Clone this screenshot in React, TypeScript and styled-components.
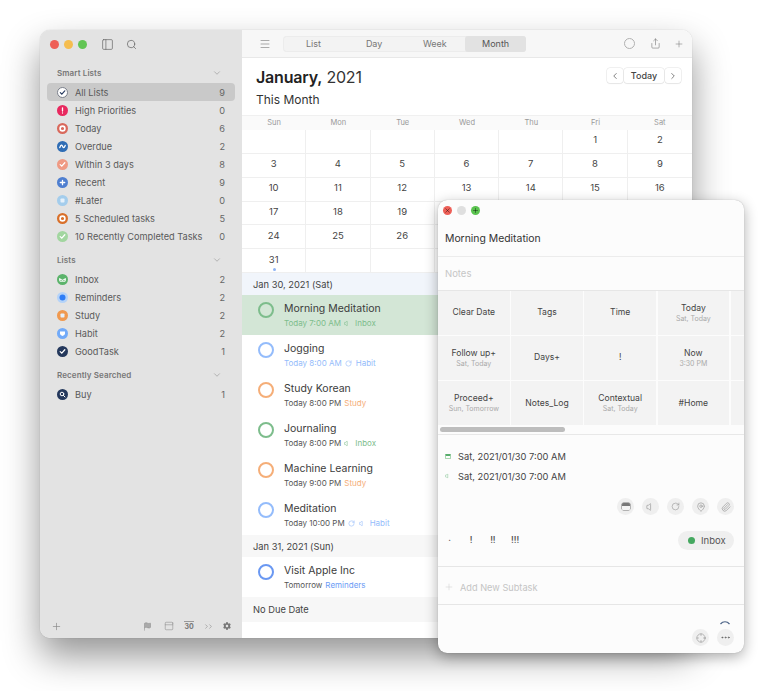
import styled, { createGlobalStyle } from 'styled-components';
import {
  ChevronDown,
  ChevronLeft,
  ChevronRight,
  Crosshair,
  Ellipsis,
  Flag,
  MapPin,
  Menu,
  PanelLeft,
  Paperclip,
  Plus,
  RotateCw,
  Search,
  Share,
  Volume,
  X,
} from 'lucide-react';
import { FaCog } from 'react-icons/fa';

const GlobalStyle = createGlobalStyle`
  html, body {
    margin: 0;
    padding: 0;
    background: #fff;
  }
  body {
    font-family: Inter, "Liberation Sans", sans-serif;
    color: #333;
    -webkit-font-smoothing: antialiased;
  }
`;

const Desktop = styled.div`
  position: relative;
  width: 768px;
  height: 691px;
  overflow: hidden;
  background: #fff;
`;

const MainWindow = styled.div`
  position: absolute;
  left: 40px;
  top: 30px;
  width: 652px;
  height: 608px;
  display: flex;
  border-radius: 10px;
  overflow: hidden;
  box-shadow: 0 0 1px rgba(0, 0, 0, 0.3), 0 18px 36px rgba(0, 0, 0, 0.42);
`;

const Sidebar = styled.aside`
  width: 202px;
  flex: none;
  display: flex;
  flex-direction: column;
  background: #e3e3e3;
`;

const SidebarBar = styled.div`
  height: 28px;
  flex: none;
  display: flex;
  align-items: center;
  padding: 0 10px;
  color: #666;
`;

const Light = styled.span<{ $color: string }>`
  width: 9px;
  height: 9px;
  margin-right: 5px;
  border-radius: 50%;
  background: ${(p) => p.$color};
`;

const BarIcon = styled.span<{ $left?: number }>`
  display: flex;
  margin-left: ${(p) => p.$left ?? 0}px;
`;

const SidebarBody = styled.div`
  padding: 5px 7px 0;
`;

const GroupHeader = styled.div<{ $top?: number }>`
  height: 19px;
  margin-top: ${(p) => p.$top ?? 0}px;
  padding: 0 13px 0 10px;
  display: flex;
  align-items: center;
  justify-content: space-between;
  font-size: 8px;
  font-weight: 600;
  letter-spacing: 0.1px;
  color: #777;
`;

const RowStack = styled.div`
  padding-top: 1px;
`;

const ListRow = styled.div<{ $active?: boolean }>`
  height: 18px;
  display: flex;
  align-items: center;
  padding: 0 10px 0 10px;
  border-radius: 4px;
  background: ${(p) => (p.$active ? '#c9c9c9' : 'transparent')};
  font-size: 9.2px;
  color: #5a5a5a;
`;

const ListName = styled.span`
  flex: 1;
  margin-left: 7px;
  white-space: nowrap;
`;

const ListCount = styled.span`
  color: #666;
`;

const SidebarFooter = styled.div`
  margin-top: auto;
  height: 24px;
  display: flex;
  align-items: center;
  padding: 0 10px 0 11px;
  color: #8a8a8a;
`;

const ThirtyIcon = styled.span`
  margin-left: 10px;
  width: 10px;
  border-top: 1px solid #999;
  font-size: 7px;
  font-weight: 700;
  line-height: 9px;
  text-align: center;
  color: #777;
`;

const Content = styled.main`
  flex: 1;
  min-width: 0;
  display: flex;
  flex-direction: column;
  background: #fff;
`;

const Toolbar = styled.div`
  height: 27px;
  flex: none;
  display: flex;
  align-items: center;
  padding: 0 8px 0 17px;
  background: #f7f7f7;
  border-bottom: 1px solid #e8e8e8;
  color: #777;
`;

const Segments = styled.div`
  width: 243px;
  height: 16px;
  margin-left: 12px;
  display: grid;
  grid-template-columns: repeat(4, 1fr);
  border-radius: 4px;
  background: #f3f3f3;
  box-shadow: inset 0 0 0 1px #ececec;
`;

const Segment = styled.div<{ $on?: boolean }>`
  display: flex;
  align-items: center;
  justify-content: center;
  border-radius: 3px;
  background: ${(p) => (p.$on ? '#e2e2e2' : 'transparent')};
  font-size: 9px;
  color: ${(p) => (p.$on ? '#555' : '#777')};
`;

const ToolbarRight = styled.div`
  margin-left: auto;
  display: flex;
  align-items: center;
  gap: 13px;
  color: #777;
`;

const RingIcon = styled.span`
  width: 9px;
  height: 9px;
  margin-right: 2px;
  border: 1px solid #b0b0b0;
  border-radius: 50%;
`;

const MonthHeader = styled.div`
  height: 57px;
  flex: none;
  display: flex;
  justify-content: space-between;
  padding: 9px 11px 0 14px;
  box-sizing: border-box;
`;

const MonthTitle = styled.div`
  font-size: 16px;
  line-height: 21px;
  color: #333;
  letter-spacing: -0.2px;

  b {
    font-weight: 600;
    color: #222;
  }
`;

const MonthSub = styled.div`
  margin-top: 4px;
  font-size: 12px;
  line-height: 15px;
  color: #333;
`;

const Pager = styled.div`
  display: flex;
  gap: 1px;
  height: 15px;
  margin-top: 1px;
`;

const PagerButton = styled.div<{ $wide?: boolean }>`
  width: ${(p) => (p.$wide ? 40 : 16)}px;
  display: flex;
  align-items: center;
  justify-content: center;
  background: #fff;
  border-radius: 3px;
  box-shadow: 0 0 0 0.5px #e2e2e2, 0 1px 1px rgba(0, 0, 0, 0.08);
  font-size: 9px;
  font-weight: 500;
  color: #444;
`;

const WeekHeader = styled.div`
  height: 15px;
  flex: none;
  display: grid;
  grid-template-columns: repeat(7, 1fr);
  background: #fafafa;
  border-top: 1px solid #f0f0f0;
  box-sizing: border-box;
`;

const WeekDay = styled.div`
  font-size: 7.5px;
  line-height: 14px;
  text-align: center;
  color: #999;
`;

const MonthGrid = styled.div`
  height: 143px;
  flex: none;
  display: grid;
  grid-template-columns: repeat(7, 1fr);
  grid-template-rows: repeat(6, 1fr);
`;

const DayCell = styled.div`
  position: relative;
  display: flex;
  align-items: center;
  justify-content: center;
  padding-bottom: 3px;
  box-sizing: border-box;
  border-right: 1px solid #efefef;
  border-bottom: 1px solid #efefef;
  font-size: 9.5px;
  color: #444;

  &:nth-child(7n) {
    border-right: 0;
  }
`;

const EventDot = styled.span`
  position: absolute;
  left: 50%;
  bottom: 1px;
  width: 3px;
  height: 3px;
  margin-left: -1px;
  border-radius: 50%;
  background: #8fb4f5;
`;

const DateHeader = styled.div<{ $today?: boolean; $height?: number }>`
  height: ${(p) => p.$height ?? 22}px;
  flex: none;
  display: flex;
  align-items: center;
  padding-left: 11px;
  background: ${(p) => (p.$today ? '#f1f5fb' : '#f7f7f7')};
  font-size: 9.3px;
  color: #444;
`;

const TaskRow = styled.div<{ $selected?: boolean }>`
  height: 40px;
  flex: none;
  box-sizing: border-box;
  display: flex;
  align-items: flex-start;
  padding: 7px 0 0 16px;
  background: ${(p) => (p.$selected ? '#d3e6d6' : '#fff')};
`;

const TaskRing = styled.span<{ $color: string }>`
  width: 12px;
  height: 12px;
  flex: none;
  border: 2px solid ${(p) => p.$color};
  border-radius: 50%;
`;

const TaskText = styled.div`
  margin-left: 10px;
`;

const TaskTitle = styled.div`
  font-size: 10.5px;
  line-height: 14px;
  color: #3c3c3c;
`;

const TaskMeta = styled.div<{ $color?: string }>`
  margin-top: 2px;
  display: flex;
  align-items: center;
  gap: 3px;
  font-size: 8px;
  line-height: 11px;
  color: ${(p) => p.$color ?? '#555'};
`;

const TaskTag = styled.span<{ $color: string }>`
  display: inline-flex;
  align-items: center;
  gap: 4px;
  color: ${(p) => p.$color};
`;

const PopupWindow = styled.div`
  position: absolute;
  left: 438px;
  top: 200px;
  width: 306px;
  height: 453px;
  display: flex;
  flex-direction: column;
  overflow: hidden;
  border-radius: 9px;
  background: #fcfcfc;
  box-shadow: 0 0 1px rgba(0, 0, 0, 0.3), 0 4px 14px rgba(0, 0, 0, 0.32);
`;

const PopupBar = styled.div`
  height: 20px;
  flex: none;
  display: flex;
  align-items: center;
  padding-left: 5px;
`;

const PopupLight = styled.span<{ $color: string }>`
  width: 9px;
  height: 9px;
  margin-right: 5px;
  display: flex;
  align-items: center;
  justify-content: center;
  border-radius: 50%;
  background: ${(p) => p.$color};
  color: rgba(0, 0, 0, 0.55);
`;

const PopupTitle = styled.div`
  height: 36px;
  flex: none;
  display: flex;
  align-items: center;
  padding-left: 7px;
  border-bottom: 1px solid #ececec;
  font-size: 10.4px;
  color: #333;
`;

const PopupNotes = styled.div`
  height: 34px;
  flex: none;
  display: flex;
  align-items: center;
  padding-left: 7px;
  box-sizing: border-box;
  border-bottom: 1px solid #e6e6e6;
  font-size: 9.5px;
  color: #c6c6c6;
`;

const ActionGrid = styled.div`
  height: 134px;
  flex: none;
  display: grid;
  grid-template-columns: repeat(5, 71.6px);
  grid-template-rows: repeat(3, 43.6px);
  gap: 1.6px;
  overflow: hidden;
`;

const ActionCell = styled.div`
  display: flex;
  flex-direction: column;
  align-items: center;
  justify-content: center;
  background: #f3f3f3;
  font-size: 8.6px;
  line-height: 11px;
  color: #444;
  white-space: nowrap;
`;

const ActionSub = styled.span`
  font-size: 7px;
  line-height: 9px;
  color: #aaa;
`;

const ScrollTrack = styled.div`
  height: 10px;
  flex: none;
  padding: 2px 2px 0;
  box-sizing: border-box;
  border-bottom: 1px solid #e8e8e8;
`;

const ScrollThumb = styled.div`
  width: 125px;
  height: 5px;
  border-radius: 3px;
  background: #bdbdbd;
`;

const DetailArea = styled.div`
  height: 132px;
  flex: none;
  box-sizing: border-box;
  padding: 11px 10px 0 7px;
  border-bottom: 1px solid #e6e6e6;
`;

const DateLine = styled.div`
  height: 20px;
  display: flex;
  align-items: center;
  gap: 7px;
  font-size: 9.3px;
  color: #444;
`;

const CalendarMark = styled.span`
  width: 6px;
  height: 5px;
  border-radius: 1px;
  border: 1px solid #a9d6b0;
  border-top: 2px solid #58ad6c;
  box-sizing: border-box;
`;

const IconRow = styled.div`
  margin-top: 12px;
  display: flex;
  justify-content: flex-end;
  gap: 8px;
`;

const RoundButton = styled.span`
  width: 17px;
  height: 17px;
  display: flex;
  align-items: center;
  justify-content: center;
  border-radius: 50%;
  background: #efefef;
  color: #8c8c8c;
`;

const HeaderMark = styled.span`
  width: 8px;
  height: 7px;
  border-radius: 1.5px;
  background: linear-gradient(#777 0 3px, #f4f4f4 3px);
  box-shadow: 0 0 0 0.5px #777;
`;

const PriorityRow = styled.div`
  height: 20px;
  margin-top: 15px;
  display: flex;
  align-items: center;
  justify-content: space-between;
`;

const Priorities = styled.div`
  display: flex;
  gap: 14.7px;
  padding-left: 1px;
  font-size: 8.5px;
  font-weight: 600;
  color: #555;
`;

const Priority = styled.span`
  width: 7px;
  text-align: center;
  white-space: nowrap;
`;

const ListPill = styled.div`
  width: 56px;
  height: 19px;
  display: flex;
  align-items: center;
  padding-left: 10px;
  gap: 6px;
  box-sizing: border-box;
  border-radius: 10px;
  background: #efefef;
  font-size: 9.5px;
  color: #555;
`;

const PillDot = styled.span`
  width: 7px;
  height: 7px;
  border-radius: 50%;
  background: #45a860;
`;

const SubtaskRow = styled.div`
  height: 38px;
  flex: none;
  display: flex;
  align-items: center;
  gap: 6px;
  padding: 3px 0 0 6px;
  box-sizing: border-box;
  border-bottom: 1px solid #e6e6e6;
  font-size: 9.2px;
  color: #c4c4c4;
`;

const PopupFooter = styled.div`
  flex: 1;
  display: flex;
  flex-direction: column;
  align-items: flex-end;
  padding: 15px 10px 0 0;
`;

const FooterArc = styled.svg`
  width: 10px;
  height: 5px;
  margin-right: 4px;
  margin-bottom: 4px;
`;

const FooterButtons = styled.div`
  display: flex;
  gap: 8px;
`;

type Glyph = 'check' | 'bang' | 'ring' | 'wave' | 'plus' | 'square' | 'tray' | 'dot' | 'shield' | 'search';

function Glyphs({ glyph }: { glyph: Glyph }) {
  const line = { fill: 'none', stroke: '#fff', strokeWidth: 1.3, strokeLinecap: 'round' as const };
  switch (glyph) {
    case 'check':
      return <path d="M3.2 5.6 4.8 7.1 7.8 3.8" {...line} />;
    case 'bang':
      return <path d="M5.5 2.8v3.2M5.5 7.8v.3" {...line} />;
    case 'ring':
      return <circle cx="5.5" cy="5.5" r="2.4" {...line} strokeWidth={1.6} />;
    case 'wave':
      return <path d="M2.8 6.6C4 3.6 5 3.6 5.6 5.4s1.6 1.6 2.6-1" {...line} />;
    case 'plus':
      return <path d="M3.3 5.5h4.4M5.5 3.3v4.4" {...line} />;
    case 'square':
      return <rect x="3.5" y="3.5" width="4" height="4" rx="0.8" fill="#e6f1fb" />;
    case 'tray':
      return <path d="M2.8 4.4v2.8h5.4V4.4M2.8 5.4h1.6l.5.8h1.2l.5-.8h1.6" {...line} strokeWidth={1} />;
    case 'dot':
      return <circle cx="5.5" cy="5.5" r="3" fill="#2f7df6" />;
    case 'shield':
      return <path d="M3 3.4h5v2.2c0 1-1.2 1.9-2.5 2.5C4.2 7.5 3 6.6 3 5.6z" fill="#fff" />;
    case 'search':
      return (
        <g {...line} strokeWidth={1}>
          <circle cx="5" cy="5" r="1.8" />
          <path d="M6.4 6.4 8 8" />
        </g>
      );
  }
}

function ListIcon({ color, glyph }: { color: string; glyph: Glyph }) {
  return (
    <svg width="11" height="11" viewBox="0 0 11 11">
      <circle cx="5.5" cy="5.5" r="5.5" fill={color} />
      <Glyphs glyph={glyph} />
    </svg>
  );
}

function AllListsIcon() {
  return (
    <svg width="11" height="11" viewBox="0 0 11 11">
      <circle cx="5.5" cy="5.5" r="5" fill="#fff" stroke="#7a7f8a" strokeWidth="1" />
      <path d="M3.3 5.6 4.8 7.1 7.8 3.8" fill="none" stroke="#2c3f63" strokeWidth="1.2" strokeLinecap="round" />
    </svg>
  );
}

const smartLists: { name: string; count: number; color: string; glyph: Glyph }[] = [
  { name: 'High Priorities', count: 0, color: '#e8295f', glyph: 'bang' },
  { name: 'Today', count: 6, color: '#d9695c', glyph: 'ring' },
  { name: 'Overdue', count: 2, color: '#2f6db5', glyph: 'wave' },
  { name: 'Within 3 days', count: 8, color: '#ef9a84', glyph: 'check' },
  { name: 'Recent', count: 9, color: '#4f7fd0', glyph: 'plus' },
  { name: '#Later', count: 0, color: '#a4cdec', glyph: 'square' },
  { name: '5 Scheduled tasks', count: 5, color: '#d9702a', glyph: 'ring' },
  { name: '10 Recently Completed Tasks', count: 0, color: '#a2d6a0', glyph: 'check' },
];

const userLists: { name: string; count: number; color: string; glyph: Glyph }[] = [
  { name: 'Inbox', count: 2, color: '#5bb36b', glyph: 'tray' },
  { name: 'Reminders', count: 2, color: '#b5d3f8', glyph: 'dot' },
  { name: 'Study', count: 2, color: '#f0994f', glyph: 'square' },
  { name: 'Habit', count: 2, color: '#72aaf8', glyph: 'shield' },
  { name: 'GoodTask', count: 1, color: '#24385c', glyph: 'check' },
];

const weekDays = ['Sun', 'Mon', 'Tue', 'Wed', 'Thu', 'Fri', 'Sat'];
const monthCells: (number | null)[] = [
  null, null, null, null, null, 1, 2,
  ...Array.from({ length: 29 }, (_, i) => i + 3),
  null, null, null, null, null, null,
];

const GREEN = '#7dbd8c';
const BLUE = '#94bcfb';
const ORANGE = '#f5ae78';

const actions: { label: string; sub?: string }[] = [
  { label: 'Clear Date' },
  { label: 'Tags' },
  { label: 'Time' },
  { label: 'Today', sub: 'Sat, Today' },
  { label: '' },
  { label: 'Follow up+', sub: 'Sat, Today' },
  { label: 'Days+' },
  { label: '!' },
  { label: 'Now', sub: '3:30 PM' },
  { label: '' },
  { label: 'Proceed+', sub: 'Sun, Tomorrow' },
  { label: 'Notes_Log' },
  { label: 'Contextual', sub: 'Sat, Today' },
  { label: '#Home' },
  { label: '' },
];

function Row({ name, count, color, glyph }: { name: string; count: number; color: string; glyph: Glyph }) {
  return (
    <ListRow>
      <ListIcon color={color} glyph={glyph} />
      <ListName>{name}</ListName>
      <ListCount>{count}</ListCount>
    </ListRow>
  );
}

export default function App() {
  return (
    <Desktop>
      <GlobalStyle />
      <MainWindow>
        <Sidebar>
          <SidebarBar>
            <Light $color="#ee5f57" />
            <Light $color="#f5bd4f" />
            <Light $color="#62c554" />
            <BarIcon $left={9}>
              <PanelLeft size={13} strokeWidth={1.3} />
            </BarIcon>
            <BarIcon $left={12}>
              <Search size={11} strokeWidth={1.6} />
            </BarIcon>
          </SidebarBar>
          <SidebarBody>
            <GroupHeader>
              Smart Lists
              <ChevronDown size={10} strokeWidth={1.3} color="#888" />
            </GroupHeader>
            <RowStack>
              <ListRow $active>
                <AllListsIcon />
                <ListName>All Lists</ListName>
                <ListCount>9</ListCount>
              </ListRow>
              {smartLists.map((item) => (
                <Row key={item.name} {...item} />
              ))}
            </RowStack>
            <GroupHeader $top={5}>
              Lists
              <ChevronDown size={10} strokeWidth={1.3} color="#888" />
            </GroupHeader>
            <RowStack>
              {userLists.map((item) => (
                <Row key={item.name} {...item} />
              ))}
            </RowStack>
            <GroupHeader $top={5}>
              Recently Searched
              <ChevronDown size={10} strokeWidth={1.3} color="#888" />
            </GroupHeader>
            <RowStack>
              <Row name="Buy" count={1} color="#24385c" glyph="search" />
            </RowStack>
          </SidebarBody>
          <SidebarFooter>
            <Plus size={11} strokeWidth={1.5} />
            <BarIcon $left={81}>
              <Flag size={9} strokeWidth={1.4} fill="#aaa" />
            </BarIcon>
            <BarIcon $left={12}>
              <PanelLeft size={10} strokeWidth={1.3} style={{ transform: 'rotate(90deg)' }} />
            </BarIcon>
            <ThirtyIcon>30</ThirtyIcon>
            <BarIcon $left={9}>
              <ChevronRight size={7} strokeWidth={2} />
              <ChevronRight size={7} strokeWidth={2} style={{ marginLeft: -3 }} />
            </BarIcon>
            <BarIcon $left={9}>
              <FaCog size={8} color="#777" />
            </BarIcon>
          </SidebarFooter>
        </Sidebar>
        <Content>
          <Toolbar>
            <Menu size={12} strokeWidth={1.2} />
            <Segments>
              <Segment>List</Segment>
              <Segment>Day</Segment>
              <Segment>Week</Segment>
              <Segment $on>Month</Segment>
            </Segments>
            <ToolbarRight>
              <RingIcon />
              <Share size={11} strokeWidth={1.3} />
              <Plus size={10} strokeWidth={1.3} />
            </ToolbarRight>
          </Toolbar>
          <MonthHeader>
            <div>
              <MonthTitle>
                <b>January,</b> 2021
              </MonthTitle>
              <MonthSub>This Month</MonthSub>
            </div>
            <Pager>
              <PagerButton>
                <ChevronLeft size={10} strokeWidth={1.6} />
              </PagerButton>
              <PagerButton $wide>Today</PagerButton>
              <PagerButton>
                <ChevronRight size={10} strokeWidth={1.6} />
              </PagerButton>
            </Pager>
          </MonthHeader>
          <WeekHeader>
            {weekDays.map((day) => (
              <WeekDay key={day}>{day}</WeekDay>
            ))}
          </WeekHeader>
          <MonthGrid>
            {monthCells.map((day, i) => (
              <DayCell key={i}>
                {day}
                {day === 31 && <EventDot />}
              </DayCell>
            ))}
          </MonthGrid>
          <DateHeader $today>Jan 30, 2021 (Sat)</DateHeader>
          <TaskRow $selected>
            <TaskRing $color={GREEN} />
            <TaskText>
              <TaskTitle>Morning Meditation</TaskTitle>
              <TaskMeta $color={GREEN}>
                Today 7:00 AM
                <TaskTag $color={GREEN}>
                  <Volume size={7} />
                  Inbox
                </TaskTag>
              </TaskMeta>
            </TaskText>
          </TaskRow>
          <TaskRow>
            <TaskRing $color={BLUE} />
            <TaskText>
              <TaskTitle>Jogging</TaskTitle>
              <TaskMeta $color={BLUE}>
                Today 8:00 AM
                <TaskTag $color={BLUE}>
                  <RotateCw size={7} />
                  Habit
                </TaskTag>
              </TaskMeta>
            </TaskText>
          </TaskRow>
          <TaskRow>
            <TaskRing $color={ORANGE} />
            <TaskText>
              <TaskTitle>Study Korean</TaskTitle>
              <TaskMeta>
                Today 8:00 PM
                <TaskTag $color={ORANGE}>Study</TaskTag>
              </TaskMeta>
            </TaskText>
          </TaskRow>
          <TaskRow>
            <TaskRing $color={GREEN} />
            <TaskText>
              <TaskTitle>Journaling</TaskTitle>
              <TaskMeta>
                Today 8:00 PM
                <TaskTag $color={GREEN}>
                  <Volume size={7} />
                  Inbox
                </TaskTag>
              </TaskMeta>
            </TaskText>
          </TaskRow>
          <TaskRow>
            <TaskRing $color={ORANGE} />
            <TaskText>
              <TaskTitle>Machine Learning</TaskTitle>
              <TaskMeta>
                Today 9:00 PM
                <TaskTag $color={ORANGE}>Study</TaskTag>
              </TaskMeta>
            </TaskText>
          </TaskRow>
          <TaskRow>
            <TaskRing $color={BLUE} />
            <TaskText>
              <TaskTitle>Meditation</TaskTitle>
              <TaskMeta>
                Today 10:00 PM
                <TaskTag $color={BLUE}>
                  <RotateCw size={7} />
                  <Volume size={7} />
                  Habit
                </TaskTag>
              </TaskMeta>
            </TaskText>
          </TaskRow>
          <DateHeader>Jan 31, 2021 (Sun)</DateHeader>
          <TaskRow>
            <TaskRing $color="#6a98f2" />
            <TaskText>
              <TaskTitle>Visit Apple Inc</TaskTitle>
              <TaskMeta>
                Tomorrow
                <TaskTag $color="#6b9bf5">Reminders</TaskTag>
              </TaskMeta>
            </TaskText>
          </TaskRow>
          <DateHeader $height={25}>No Due Date</DateHeader>
        </Content>
      </MainWindow>

      <PopupWindow>
        <PopupBar>
          <PopupLight $color="#ee5f57">
            <X size={7} strokeWidth={2.5} />
          </PopupLight>
          <PopupLight $color="#dfdfdf" />
          <PopupLight $color="#5ac34f">
            <Plus size={7} strokeWidth={2.5} />
          </PopupLight>
        </PopupBar>
        <PopupTitle>Morning Meditation</PopupTitle>
        <PopupNotes>Notes</PopupNotes>
        <ActionGrid>
          {actions.map((action, i) => (
            <ActionCell key={i}>
              {action.label}
              {action.sub && <ActionSub>{action.sub}</ActionSub>}
            </ActionCell>
          ))}
        </ActionGrid>
        <ScrollTrack>
          <ScrollThumb />
        </ScrollTrack>
        <DetailArea>
          <DateLine>
            <CalendarMark />
            Sat, 2021/01/30 7:00 AM
          </DateLine>
          <DateLine>
            <Volume size={6} color="#7fc08e" />
            Sat, 2021/01/30 7:00 AM
          </DateLine>
          <IconRow>
            <RoundButton>
              <HeaderMark />
            </RoundButton>
            <RoundButton>
              <Volume size={10} strokeWidth={1.4} />
            </RoundButton>
            <RoundButton>
              <RotateCw size={9} strokeWidth={1.4} />
            </RoundButton>
            <RoundButton>
              <MapPin size={10} strokeWidth={1.4} />
            </RoundButton>
            <RoundButton>
              <Paperclip size={10} strokeWidth={1.4} />
            </RoundButton>
          </IconRow>
          <PriorityRow>
            <Priorities>
              <Priority>·</Priority>
              <Priority>!</Priority>
              <Priority>!!</Priority>
              <Priority>!!!</Priority>
            </Priorities>
            <ListPill>
              <PillDot />
              Inbox
            </ListPill>
          </PriorityRow>
        </DetailArea>
        <SubtaskRow>
          <Plus size={10} strokeWidth={1} />
          Add New Subtask
        </SubtaskRow>
        <PopupFooter>
          <FooterArc viewBox="0 0 10 5">
            <path d="M0.5 4C3 1 7 1 9.5 4" fill="none" stroke="#4a6286" strokeWidth="1.2" />
          </FooterArc>
          <FooterButtons>
            <RoundButton>
              <Crosshair size={10} strokeWidth={1.3} />
            </RoundButton>
            <RoundButton>
              <Ellipsis size={11} strokeWidth={2} color="#666" />
            </RoundButton>
          </FooterButtons>
        </PopupFooter>
      </PopupWindow>
    </Desktop>
  );
}
